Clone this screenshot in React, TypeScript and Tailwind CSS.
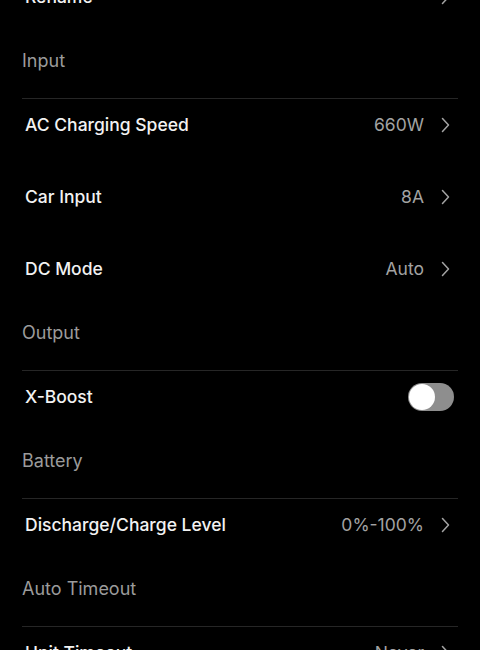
import React from 'react';

type Row = { title: string; value?: string; toggle?: boolean };
type Section = { header?: string; rows: Row[] };

const Chevron: React.FC = () => (
  <svg width="9" height="16" viewBox="0 0 9 16" fill="none" className="shrink-0">
    <path d="M1.5 1.5L7.5 8L1.5 14.5" stroke="#a3a3a3" strokeWidth="1.5" strokeLinecap="round" strokeLinejoin="round" />
  </svg>
);

const Toggle: React.FC<{ on?: boolean }> = ({ on }) => (
  <div className={`w-[46px] h-[28px] rounded-full flex items-center px-[1px] ${on ? 'bg-[#22c55e] justify-end' : 'bg-[#8e8e8e] justify-start'}`}>
    <div className="w-[26px] h-[26px] rounded-full bg-white" />
  </div>
);

const SettingRow: React.FC<{ row: Row }> = ({ row }) => (
  <div className="h-[52px] flex items-center justify-between pl-[3px] pr-[8px]">
    <span className="text-[17.5px] font-medium text-[#f2f2f2]">{row.title}</span>
    {row.toggle ? (
      <div className="-mr-[4px]"><Toggle /></div>
    ) : (
      <div className="flex items-center gap-[17px]">
        {row.value && <span className="text-[17.5px] text-[#a3a3a3]">{row.value}</span>}
        <Chevron />
      </div>
    )}
  </div>
);

const App: React.FC = () => {
  const sections: Section[] = [
    { rows: [{ title: 'Rename' }] },
    {
      header: 'Input',
      rows: [
        { title: 'AC Charging Speed', value: '660W' },
        { title: 'Car Input', value: '8A' },
        { title: 'DC Mode', value: 'Auto' },
      ],
    },
    { header: 'Output', rows: [{ title: 'X-Boost', toggle: true }] },
    { header: 'Battery', rows: [{ title: 'Discharge/Charge Level', value: '0%-100%' }] },
    { header: 'Auto Timeout', rows: [{ title: 'Unit Timeout', value: 'Never' }] },
  ];

  return (
    <div className="bg-black min-h-screen w-[480px] h-[650px] overflow-hidden" style={{ fontFamily: 'Inter, "Noto Sans", sans-serif' }}>
      <div className="px-[22px] -mt-[29px]">
        {sections.map((s, i) => (
          <div key={i}>
            {s.header && (
              <div className="h-[76px] flex items-center border-b border-[#262626]">
                <span className="text-[18px] text-[#9b9b9b]">{s.header}</span>
              </div>
            )}
            <div className="flex flex-col gap-5">
              {s.rows.map((r) => (
                <SettingRow key={r.title} row={r} />
              ))}
            </div>
          </div>
        ))}
      </div>
    </div>
  );
};

export default App;
